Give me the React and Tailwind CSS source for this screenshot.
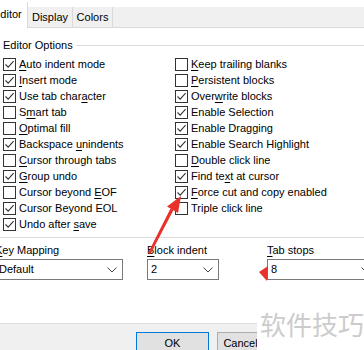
import React from "react"

const leftOptions = [
    { label: "&Auto indent mode", checked: true },
    { label: "&Insert mode", checked: true },
    { label: "Use tab char&acter", checked: true },
    { label: "S&mart tab", checked: false },
    { label: "&Optimal fill", checked: false },
    { label: "Backspace &unindents", checked: true },
    { label: "&Cursor through tabs", checked: false },
    { label: "&Group undo", checked: true },
    { label: "Cursor beyond &EOF", checked: false },
    { label: "Cursor Beyond EOL", checked: true },
    { label: "Undo after &save", checked: true },
]

const rightOptions = [
    { label: "&Keep trailing blanks", checked: false },
    { label: "&Persistent blocks", checked: false },
    { label: "Over&write blocks", checked: true },
    { label: "Enable Selection", checked: true },
    { label: "Enable Dragging", checked: true },
    { label: "Enable Search Highlight", checked: true },
    { label: "&Double click line", checked: false },
    { label: "Find te&xt at cursor", checked: true },
    { label: "&Force cut and copy enabled", checked: true },
    { label: "Triple click line", checked: false },
]

// "&" marks the access key letter, drawn underlined like a Win32 dialog
function Mnemonic({ text }) {
    const i = text.indexOf("&")
    if (i < 0) return <span>{text}</span>
    return (
        <span>
            {text.slice(0, i)}
            <span className="underline underline-offset-[2px]">{text[i + 1]}</span>
            {text.slice(i + 2)}
        </span>
    )
}

function CheckBox({ checked }) {
    return (
        <span className="w-[13px] h-[13px] shrink-0 border border-[#333333] bg-white flex items-center justify-center">
            {checked && (
                <svg width="11" height="11" viewBox="0 0 11 11">
                    <path d="M1.5 5.5 L4.2 8.2 L9.6 2.2" fill="none" stroke="#333333" strokeWidth="1.1" />
                </svg>
            )}
        </span>
    )
}

function OptionRow({ label, checked }) {
    return (
        <div className="h-[16px] flex items-center gap-[3px] whitespace-nowrap">
            <CheckBox checked={checked} />
            <Mnemonic text={label} />
        </div>
    )
}

function Chevron() {
    return (
        <svg width="10" height="6" viewBox="0 0 10 6">
            <path d="M0.5 0.5 L5 5 L9.5 0.5" fill="none" stroke="#444444" strokeWidth="1" />
        </svg>
    )
}

function ComboField({ label, value, className }) {
    return (
        <div className={"shrink-0 " + className}>
            <div className="h-[14px] leading-[14px] whitespace-nowrap">
                <Mnemonic text={label} />
            </div>
            <div className="mt-[2px] h-[21px] border border-[#7a7a7a] bg-white flex items-center justify-between pl-[3px] pr-[5px]">
                <span>{value}</span>
                <Chevron />
            </div>
        </div>
    )
}

export default function App() {
    return (
        <div
            className="relative w-[364px] h-[350px] overflow-hidden bg-white text-black text-[11px]"
            style={{ fontFamily: '"Liberation Sans", Arial, sans-serif' }}
        >
            {/* Tabs */}
            <div className="flex items-end h-[28px]">
                <div className="ml-[-9px] w-[37px] h-[26px] pl-[2px] pt-[4px] bg-white border-r border-[#d9d9d9]">
                    Editor
                </div>
                <div className="flex-1 h-[21px] bg-[#f0f0f0] border-b border-[#d9d9d9] flex">
                    <div className="w-[45px] border-r border-[#d9d9d9] flex items-center justify-center">Display</div>
                    <div className="w-[40px] border-r border-[#d9d9d9] flex items-center justify-center">Colors</div>
                </div>
            </div>

            {/* Tab page */}
            <div className="h-[296px] pt-[11px] border-b border-[#dfdfdf]">
                <div className="border-b border-[#dcdcdc] pb-[5px]">
                    <div className="h-[12px] flex items-center pl-[3px]">
                        <span className="leading-[12px]">Editor Options</span>
                        <span className="flex-1 h-px bg-[#dcdcdc] ml-[3px]" />
                    </div>
                    <div className="mt-[5px] grid grid-cols-[172px_1fr] pl-[3px]">
                        <div className="flex flex-col">
                            {leftOptions.map((o) => (
                                <OptionRow key={o.label} {...o} />
                            ))}
                        </div>
                        <div className="flex flex-col">
                            {rightOptions.map((o) => (
                                <OptionRow key={o.label} {...o} />
                            ))}
                        </div>
                    </div>
                </div>

                <div className="mt-[5px] flex">
                    <ComboField label="&Key Mapping" value="Default" className="ml-[-5px] w-[128px]" />
                    <ComboField label="&Block indent" value="2" className="ml-[24px] w-[72px]" />
                    <ComboField label="&Tab stops" value="8" className="ml-[48px] w-[110px]" />
                </div>
            </div>

            {/* Button bar */}
            <div className="h-[30px] bg-[#f0f0f0] pt-[8px] pl-[136px] flex gap-[8px]">
                <button className="shrink-0 w-[73px] h-[23px] border border-[#0078d7] bg-[#e1e1e1] text-[11px]">OK</button>
                <button className="shrink-0 w-[47px] h-[23px] border border-[#adadad] bg-[#e1e1e1] text-[11px]">Cancel</button>
            </div>

            {/* Watermark */}
            <div
                className="absolute left-[257px] top-[300px] right-0 bottom-0 bg-white text-[26px] leading-none text-[#cccccc] pl-[3px] pt-[11px]"
                style={{ fontFamily: '"Noto Sans CJK SC", sans-serif' }}
            >
                软件技巧
            </div>

            {/* Red annotation arrows */}
            <svg className="absolute left-0 top-0 pointer-events-none" width="364" height="350">
                <polygon points="148,253 150.5,254 173.5,210 170.5,208.5" fill="#e8312a" />
                <polygon points="181,196 167,206.5 178,213" fill="#e8312a" />
                <polygon points="268,266 259,272 267,281" fill="#e8312a" />
            </svg>
        </div>
    )
}
